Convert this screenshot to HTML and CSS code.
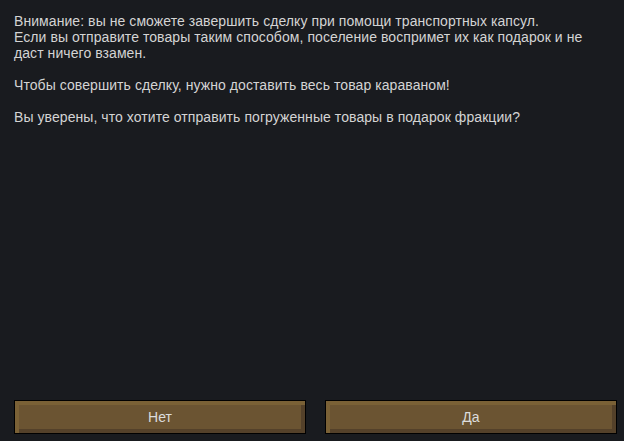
FILE: index.html
```html
<!DOCTYPE html>
<html lang="ru">
<head>
    <meta charset="utf-8">
    <title>Подарок фракции</title>
    <link rel="stylesheet" href="styles.css">
</head>
<body>
    <!-- окно подтверждения -->
    <div class="dialog">
        <div class="msg">
            <p>Внимание: вы не сможете завершить сделку при помощи транспортных капсул.<br>
            Если вы отправите товары таким способом, поселение воспримет их как подарок и не даст ничего взамен.</p>
            <p>Чтобы совершить сделку, нужно доставить весь товар караваном!</p>
            <p>Вы уверены, что хотите отправить погруженные товары в подарок фракции?</p>
        </div>
        <div class="btns">
            <button class="btn">Нет</button>
            <button class="btn">Да</button>
        </div>
    </div>
</body>
</html>
```

FILE: styles.css
```css
* {margin: 0; padding: 0; box-sizing: border-box;}
html, body {height: 100%;}
body {background: #191b1f; font: 14px/16px "Liberation Sans", Arial, sans-serif; color: #d4d4d4; letter-spacing: 0.07px;}

.dialog {height: 100%; display: flex; flex-direction: column; padding: 13px 7px 7px 14px;}
.msg {flex: 1; padding-right: 8px;}
.msg p {margin-bottom: 16px;}

/*кнопки*/
.btns {display: flex; gap: 19px;}
.btn {flex: 0 0 292px; height: 34px; border: 1px solid #000; background: #6b5432;
      box-shadow: inset 4px 4px 0 #7a6136, inset -4px -4px 0 #54412a;
      font: 14px "Liberation Sans", Arial, sans-serif; color: #dcdcdc; cursor: pointer;}
```
